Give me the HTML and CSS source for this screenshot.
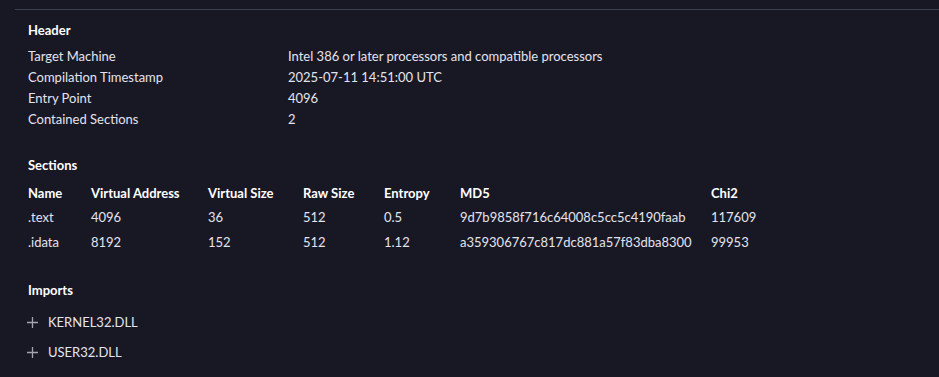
FILE: index.html
```html
<!DOCTYPE html>
<html>
<head>
<meta charset="utf-8">
<link rel="stylesheet" href="styles.css">
</head>
<body>
<div class="panel">
  <section class="block">
    <h3 class="title">Header</h3>
    <div class="kv">
      <div class="k">Target Machine</div><div class="v">Intel 386 or later processors and compatible processors</div>
      <div class="k">Compilation Timestamp</div><div class="v">2025-07-11 14:51:00 UTC</div>
      <div class="k">Entry Point</div><div class="v">4096</div>
      <div class="k">Contained Sections</div><div class="v">2</div>
    </div>
  </section>
  <section class="block sections">
    <h3 class="title">Sections</h3>
    <div class="table">
      <div class="tr th"><div>Name</div><div>Virtual Address</div><div>Virtual Size</div><div>Raw Size</div><div>Entropy</div><div>MD5</div><div>Chi2</div></div>
      <div class="tr"><div>.text</div><div>4096</div><div>36</div><div>512</div><div>0.5</div><div>9d7b9858f716c64008c5cc5c4190faab</div><div>117609</div></div>
      <div class="tr"><div>.idata</div><div>8192</div><div>152</div><div>512</div><div>1.12</div><div>a359306767c817dc881a57f83dba8300</div><div>99953</div></div>
    </div>
  </section>
  <section class="block imports">
    <h3 class="title">Imports</h3>
    <div class="imp"><svg class="plus" width="11" height="11" viewBox="0 0 11 11"><path d="M5.5 0v11M0 5.5h11" stroke="#a4a4b0" stroke-width="1.3"/></svg><span>KERNEL32.DLL</span></div>
    <div class="imp"><svg class="plus" width="11" height="11" viewBox="0 0 11 11"><path d="M5.5 0v11M0 5.5h11" stroke="#a4a4b0" stroke-width="1.3"/></svg><span>USER32.DLL</span></div>
  </section>
</div>
</body>
</html>
```
FILE: styles.css
```css
html, body {
  margin: 0;
  background: #181825;
}
body {
  font-family: Lato, "Noto Sans", sans-serif;
  font-size: 13px;
  color: #e4e4ee;
  height: 377px;
  overflow: hidden;
}
.panel {
  margin: 9px 0 0 15px;
  border-top: 1px solid #3c4050;
  padding: 10px 0 0 13px;
}
.title {
  margin: 0;
  font-size: 13px;
  font-weight: 700;
  line-height: 21px;
  color: #ffffff;
}
.kv {
  display: grid;
  grid-template-columns: 260px 1fr;
  margin-top: 5px;
  line-height: 21px;
}
.sections { margin-top: 25px; }
.table { margin-top: 5px; }
.tr {
  display: grid;
  grid-template-columns: 63px 117px 95px 81px 76px 251px 1fr;
  height: 24.5px;
  line-height: 24.5px;
}
.th { font-weight: 700; color: #ffffff; height: 24px; line-height: 24px; }
.imports { margin-top: 26px; }
.imports .title { margin-bottom: 6px; }
.imp {
  display: flex;
  align-items: center;
  height: 30px;
}
.plus { margin: 0 10px 0 -1px; flex: none; }
```
